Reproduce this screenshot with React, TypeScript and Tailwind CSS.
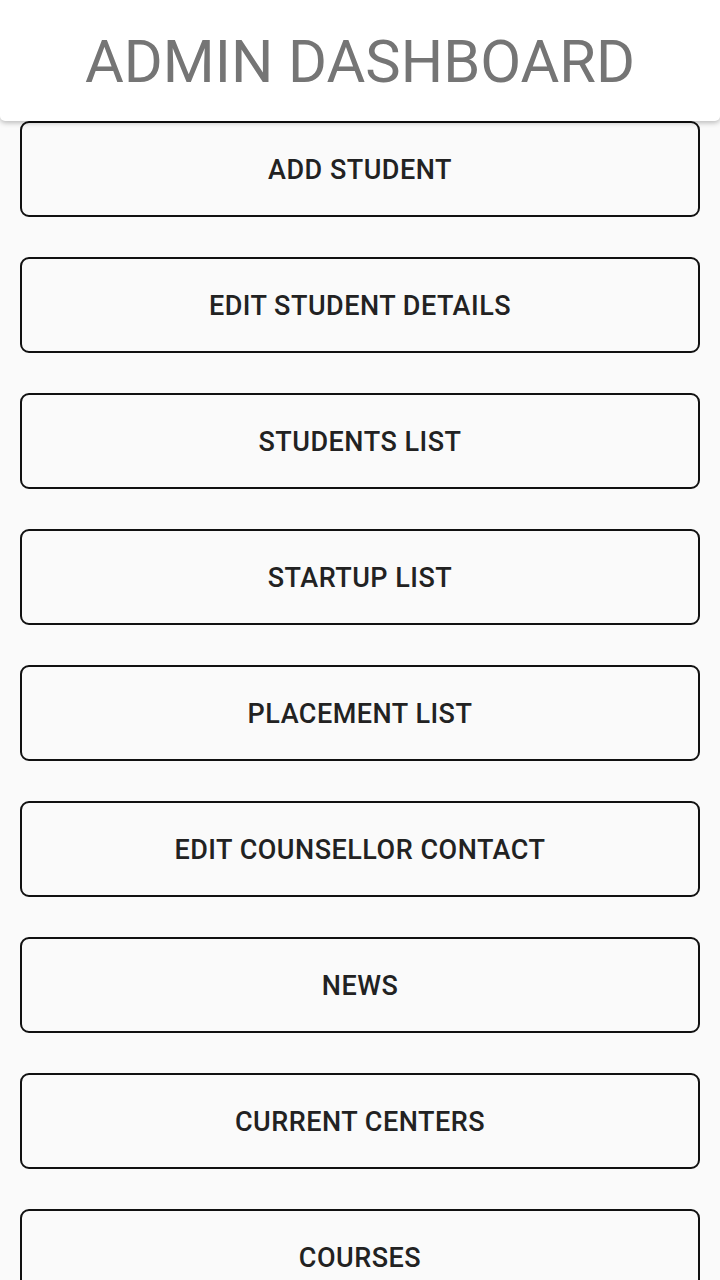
import React from "react";

const items = [
  "ADD STUDENT",
  "EDIT STUDENT DETAILS",
  "STUDENTS LIST",
  "STARTUP LIST",
  "PLACEMENT LIST",
  "EDIT COUNSELLOR CONTACT",
  "NEWS",
  "CURRENT CENTERS",
  "COURSES",
];

export default function App() {
  return (
    <div
      className="w-[720px] h-[1280px] overflow-hidden bg-[#fafafa] flex flex-col"
      style={{ fontFamily: "Roboto, 'Liberation Sans', sans-serif" }}
    >
      <div className="relative z-10 h-[121px] shrink-0 bg-white rounded-b-[5px] shadow-[0_2px_5px_rgba(0,0,0,0.25)] flex items-center justify-center">
        <h1 className="text-[59.5px] leading-none text-[#757575] font-normal mt-[5px]">
          ADMIN DASHBOARD
        </h1>
      </div>
      <div className="flex flex-col gap-[40px] px-[20px]">
        {items.map((t) => (
          <button
            key={t}
            className="h-[96px] w-full shrink-0 rounded-[9px] border-2 border-[#111] bg-[#fafafa] text-[27px] font-medium text-[#222] tracking-[0.5px] flex items-center justify-center pt-[3px]"
          >
            {t}
          </button>
        ))}
      </div>
    </div>
  );
}
